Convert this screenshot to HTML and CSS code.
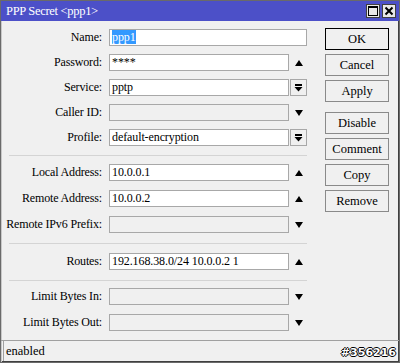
FILE: index.html
```html
<!DOCTYPE html>
<html lang="en">
<head>
    <meta charset="UTF-8">
    <title>PPP Secret &lt;ppp1&gt;</title>
    <link rel="stylesheet" href="styles.css">
</head>
<body>
    <div class="window">
        <div class="title-bar">
            <span class="title-text">PPP Secret &lt;ppp1&gt;</span>
            <div class="title-buttons">
                <span class="title-btn">
                    <svg width="12" height="12" viewBox="0 0 12 12"><rect x="1.5" y="1.5" width="9" height="9" fill="none" stroke="#000" stroke-width="1"/><line x1="1" y1="2" x2="11" y2="2" stroke="#000" stroke-width="2"/></svg>
                </span>
                <span class="title-btn">
                    <svg width="12" height="12" viewBox="0 0 12 12"><path d="M2.5 2.5 L9.5 9.5 M9.5 2.5 L2.5 9.5" stroke="#000" stroke-width="2"/></svg>
                </span>
            </div>
        </div>

        <div class="content">
            <div class="form">
                <div class="group g1">
                    <div class="row">
                        <label>Name:</label>
                        <div class="field wide"><span class="selected">ppp1</span></div>
                    </div>
                    <div class="row">
                        <label>Password:</label>
                        <div class="field">****</div>
                        <span class="icon up"></span>
                    </div>
                    <div class="row">
                        <label>Service:</label>
                        <div class="field">pptp</div>
                        <span class="combo"><svg width="9" height="8" viewBox="0 0 9 8"><rect x="1" y="0" width="7" height="2" fill="#000"/><path d="M0.5 3 L8.5 3 L4.5 7.5 Z" fill="#000"/></svg></span>
                    </div>
                    <div class="row">
                        <label>Caller ID:</label>
                        <div class="field off"></div>
                        <span class="icon down"></span>
                    </div>
                    <div class="row">
                        <label>Profile:</label>
                        <div class="field">default-encryption</div>
                        <span class="combo"><svg width="9" height="8" viewBox="0 0 9 8"><rect x="1" y="0" width="7" height="2" fill="#000"/><path d="M0.5 3 L8.5 3 L4.5 7.5 Z" fill="#000"/></svg></span>
                    </div>
                </div>

                <div class="sep s1"></div>

                <div class="group">
                    <div class="row">
                        <label>Local Address:</label>
                        <div class="field">10.0.0.1</div>
                        <span class="icon up"></span>
                    </div>
                    <div class="row">
                        <label>Remote Address:</label>
                        <div class="field">10.0.0.2</div>
                        <span class="icon up"></span>
                    </div>
                    <div class="row">
                        <label>Remote IPv6 Prefix:</label>
                        <div class="field off"></div>
                        <span class="icon down"></span>
                    </div>
                </div>

                <div class="sep s2"></div>

                <div class="group">
                    <div class="row">
                        <label>Routes:</label>
                        <div class="field">192.168.38.0/24 10.0.0.2 1</div>
                        <span class="icon up"></span>
                    </div>
                </div>

                <div class="sep s3"></div>

                <div class="group">
                    <div class="row">
                        <label>Limit Bytes In:</label>
                        <div class="field off"></div>
                        <span class="icon down"></span>
                    </div>
                    <div class="row">
                        <label>Limit Bytes Out:</label>
                        <div class="field off"></div>
                        <span class="icon down"></span>
                    </div>
                </div>
            </div>

            <div class="buttons">
                <button class="btn default">OK</button>
                <button class="btn">Cancel</button>
                <button class="btn">Apply</button>
                <button class="btn spaced">Disable</button>
                <button class="btn">Comment</button>
                <button class="btn">Copy</button>
                <button class="btn">Remove</button>
            </div>
        </div>

        <div class="status-bar">
            <span class="status-text">enabled</span>
            <span class="watermark">#356216</span>
        </div>
    </div>
</body>
</html>
```

FILE: styles.css
```css
body {
    margin: 0;
    background-color: #f0f0f0;
    font-family: 'Liberation Serif', 'Times New Roman', serif;
    font-size: 12px;
    color: #000;
}

.window {
    width: 400px;
    height: 363px;
    box-sizing: border-box;
    border: 1px solid #6a6a6a;
    box-shadow: inset 1px 1px 0 #c8c8c8, inset -1px -1px 0 #404040;
    background-color: #f0f0f0;
    display: flex;
    flex-direction: column;
    position: relative;
}

.title-bar {
    height: 20px;
    background-color: #4c50c8;
    display: flex;
    align-items: center;
    justify-content: space-between;
    padding: 0 3px 0 5px;
}

.title-text {
    color: #fff;
    font-size: 12.5px;
    letter-spacing: -0.3px;
    line-height: 20px;
}

.title-buttons {
    display: flex;
    gap: 2px;
}

.title-btn {
    width: 14px;
    height: 14px;
    box-sizing: border-box;
    border: 1px solid #404040;
    background-color: #e8e8e8;
    display: flex;
    align-items: center;
    justify-content: center;
}

.content {
    display: flex;
    flex: 1;
}

.form {
    width: 306px;
    padding-top: 8px;
}

.group {
    display: flex;
    flex-direction: column;
    gap: 9px;
}

.g1 {
    gap: 8px;
}

.row {
    display: flex;
    align-items: center;
    height: 17px;
}

.row label {
    width: 101px;
    text-align: right;
    margin-right: 7px;
    white-space: nowrap;
    letter-spacing: -0.15px;
}

.field {
    width: 180px;
    height: 17px;
    box-sizing: border-box;
    border: 1px solid #a8a8a8;
    background-color: #fff;
    padding-left: 2px;
    line-height: 15px;
    white-space: nowrap;
    overflow: hidden;
    letter-spacing: -0.1px;
}

.field.wide {
    width: 198px;
}

.field.off {
    background-color: #f0f0f0;
}

.selected {
    background-color: #3399ff;
    color: #fff;
}

.icon {
    width: 0;
    height: 0;
    margin-left: 6px;
    border-left: 4.5px solid transparent;
    border-right: 4.5px solid transparent;
}

.icon.up {
    border-bottom: 6px solid #000;
}

.icon.down {
    border-top: 6px solid #000;
}

.combo {
    width: 17px;
    height: 17px;
    box-sizing: border-box;
    border: 1px solid #a8a8a8;
    margin-left: 1px;
    display: flex;
    align-items: center;
    justify-content: center;
}

.sep {
    height: 1px;
    margin-left: 8px;
    background-color: #d4d4d4;
}

.s1 {
    margin-top: 9px;
    margin-bottom: 8px;
}

.s2 {
    margin-top: 10px;
    margin-bottom: 9px;
}

.s3 {
    margin-top: 10px;
    margin-bottom: 7px;
}

.buttons {
    margin-left: 18px;
    padding-top: 7px;
    display: flex;
    flex-direction: column;
    gap: 4px;
}

.btn {
    width: 64px;
    height: 22px;
    padding: 0;
    border: 1px solid #8a8a8a;
    background-color: #f0f0f0;
    font-family: 'Liberation Serif', 'Times New Roman', serif;
    font-size: 12.5px;
    color: #000;
}

.btn.default {
    border-color: #000;
}

.btn.spaced {
    margin-top: 6px;
}

.status-bar {
    height: 20px;
    margin-bottom: 1px;
    border-top: 1px solid #a0a0a0;
    display: flex;
    align-items: center;
    justify-content: space-between;
    padding-right: 3px;
}

.status-text {
    margin-left: 2px;
    padding-left: 2px;
    border-left: 1px solid #a0a0a0;
    height: 20px;
    line-height: 20px;
    font-size: 12.5px;
}

.watermark {
    font-family: 'DejaVu Sans', sans-serif;
    font-weight: bold;
    font-size: 11px;
    color: #fff;
    text-shadow: 1px 0 0 #000, -1px 0 0 #000, 0 1px 0 #000, 0 -1px 0 #000;
    align-self: flex-end;
    margin-bottom: 2px;
}
```
